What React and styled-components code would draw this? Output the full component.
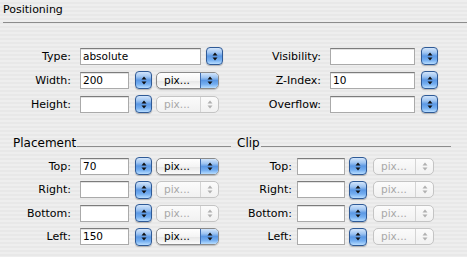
import React from "react";
import styled, { createGlobalStyle, css } from "styled-components";

const GlobalStyle = createGlobalStyle`
  html, body { margin: 0; padding: 0; }
  body {
    background: repeating-linear-gradient(to bottom, #eeeeee 0px, #eeeeee 2px, #e8e8e8 2px, #e8e8e8 4px);
    font-family: "DejaVu Sans", "Liberation Sans", sans-serif;
    color: #000;
  }
`;

const Panel = styled.div`
  width: 467px;
  height: 257px;
  overflow: hidden;
`;

const Header = styled.div`
  margin-left: 3px;
  height: 22px;
  box-sizing: content-box;
  border-bottom: 1px solid #8c8c8c;
  font-size: 11px;
  line-height: 13px;
  > span { display: block; padding-top: 3px; }
`;

const Columns = styled.div`
  display: flex;
  margin-top: ${(p) => p.$top}px;
`;

const Column = styled.div`
  width: ${(p) => p.$width}px;
  margin-left: ${(p) => p.$ml || 0}px;
  padding-left: ${(p) => p.$pl || 0}px;
  box-sizing: border-box;
  flex-shrink: 0;
`;

const Row = styled.div`
  display: flex;
  align-items: center;
  height: ${(p) => p.$h}px;
`;

const Label = styled.span`
  width: ${(p) => p.$w}px;
  margin-right: ${(p) => p.$mr}px;
  text-align: right;
  font-size: 11px;
  white-space: nowrap;
  flex-shrink: 0;
`;

const TextField = styled.div`
  width: ${(p) => p.$w}px;
  height: 17px;
  box-sizing: border-box;
  background: #fff;
  border: 1px solid #aaaaaa;
  border-top-color: #7c7c7c;
  box-shadow: inset 0 1px 0 #e2e2e2;
  font-size: 10.5px;
  line-height: 15px;
  padding-left: 2px;
  flex-shrink: 0;
  overflow: hidden;
  white-space: nowrap;
`;

const aquaBlue = css`
  background: linear-gradient(
    to bottom,
    #d2e5fb 0%,
    #9ec4f1 30%,
    #5b98e4 50%,
    #74aef0 75%,
    #b8ddff 100%
  );
`;

const StepperBox = styled.span`
  display: flex;
  align-items: center;
  justify-content: center;
  width: ${(p) => p.$w || 17}px;
  height: 18px;
  margin-left: ${(p) => p.$ml}px;
  box-sizing: border-box;
  border: 1px solid #2f5a96;
  border-radius: 4px;
  ${aquaBlue};
  box-shadow: 0 1px 1px rgba(0, 0, 0, 0.25);
  flex-shrink: 0;
`;

const Arrows = ({ color = "#111" }) => (
  <svg width="6" height="9" viewBox="0 0 6 9">
    <path d="M3 0.5 L5.5 3.5 L0.5 3.5 Z" fill={color} />
    <path d="M3 8.5 L5.5 5.5 L0.5 5.5 Z" fill={color} />
  </svg>
);

const Stepper = ({ ml, w }) => (
  <StepperBox $ml={ml} $w={w}>
    <Arrows />
  </StepperBox>
);

const PopupBox = styled.span`
  display: flex;
  align-items: stretch;
  width: ${(p) => p.$w}px;
  height: 17px;
  margin-left: ${(p) => p.$ml}px;
  box-sizing: border-box;
  border: 1px solid ${(p) => (p.$disabled ? "#c4c4c4" : "#8a8a8a")};
  border-radius: 5px;
  overflow: hidden;
  background: ${(p) =>
    p.$disabled
      ? "linear-gradient(to bottom, #fbfbfb, #f1f1f1)"
      : "linear-gradient(to bottom, #ffffff 0%, #f4f4f4 50%, #e6e6e6 51%, #fafafa 100%)"};
  box-shadow: ${(p) => (p.$disabled ? "none" : "0 1px 1px rgba(0,0,0,0.2)")};
  flex-shrink: 0;
`;

const PopupText = styled.span`
  flex: 1;
  padding-left: 7px;
  font-size: 10.5px;
  line-height: 15px;
  color: ${(p) => (p.$disabled ? "#a8a8a8" : "#000")};
  white-space: nowrap;
`;

const PopupArrowCell = styled.span`
  width: 17px;
  display: flex;
  align-items: center;
  justify-content: center;
  ${(p) =>
    p.$disabled
      ? css`
          border-left: 1px solid #d4d4d4;
        `
      : css`
          border-left: 1px solid #3f6db0;
          ${aquaBlue};
        `}
`;

const Popup = ({ ml, w, disabled }) => (
  <PopupBox $ml={ml} $w={w} $disabled={disabled}>
    <PopupText $disabled={disabled}>pix...</PopupText>
    <PopupArrowCell $disabled={disabled}>
      <Arrows color={disabled ? "#b0b0b0" : "#111"} />
    </PopupArrowCell>
  </PopupBox>
);

const Heading = styled.div`
  display: flex;
  align-items: flex-end;
  height: 14px;
  margin-bottom: 4.5px;
`;

const HeadingText = styled.span`
  font-size: 12px;
  line-height: 14px;
  white-space: nowrap;
`;

const Rule = styled.span`
  flex: 1;
  margin-left: 1px;
  margin-bottom: 3px;
  border-bottom: 1px solid #8c8c8c;
`;

const placementRows = [
  { label: "Top", value: "70", enabled: true },
  { label: "Right", value: "", enabled: false },
  { label: "Bottom", value: "", enabled: false },
  { label: "Left", value: "150", enabled: true },
];

const clipRows = ["Top", "Right", "Bottom", "Left"];

export default function App() {
  return (
    <Panel>
      <GlobalStyle />
      <Header>
        <span>Positioning</span>
      </Header>

      <Columns $top={21}>
        <Column $width={230}>
          <Row $h={24}>
            <Label $w={71} $mr={9}>Type:</Label>
            <TextField $w={121}>absolute</TextField>
            <Stepper ml={5} />
          </Row>
          <Row $h={24}>
            <Label $w={71} $mr={9}>Width:</Label>
            <TextField $w={49}>200</TextField>
            <Stepper ml={6} />
            <Popup ml={4} w={63} />
          </Row>
          <Row $h={24}>
            <Label $w={71} $mr={9}>Height:</Label>
            <TextField $w={49} />
            <Stepper ml={6} />
            <Popup ml={4} w={63} disabled />
          </Row>
        </Column>
        <Column $width={237}>
          <Row $h={24}>
            <Label $w={91} $mr={9}>Visibility:</Label>
            <TextField $w={85} />
            <Stepper ml={6} />
          </Row>
          <Row $h={24}>
            <Label $w={91} $mr={9}>Z-Index:</Label>
            <TextField $w={85}>10</TextField>
            <Stepper ml={6} />
          </Row>
          <Row $h={24}>
            <Label $w={91} $mr={9}>Overflow:</Label>
            <TextField $w={85} />
            <Stepper ml={6} />
          </Row>
        </Column>
      </Columns>

      <Columns $top={20}>
        <Column $width={231} $pl={13}>
          <Heading>
            <HeadingText>Placement</HeadingText>
            <Rule />
          </Heading>
          {placementRows.map((r) => (
            <Row $h={23.5} key={r.label}>
              <Label $w={58} $mr={9}>{r.label}:</Label>
              <TextField $w={49}>{r.value}</TextField>
              <Stepper ml={6} />
              <Popup ml={4} w={63} disabled={!r.enabled} />
            </Row>
          ))}
        </Column>
        <Column $width={214} $ml={6}>
          <Heading>
            <HeadingText>Clip</HeadingText>
            <Rule />
          </Heading>
          {clipRows.map((l) => (
            <Row $h={23.5} key={l}>
              <Label $w={55} $mr={5}>{l}:</Label>
              <TextField $w={48} />
              <Stepper ml={4} w={18} />
              <Popup ml={6} w={61} disabled />
            </Row>
          ))}
        </Column>
      </Columns>
    </Panel>
  );
}
